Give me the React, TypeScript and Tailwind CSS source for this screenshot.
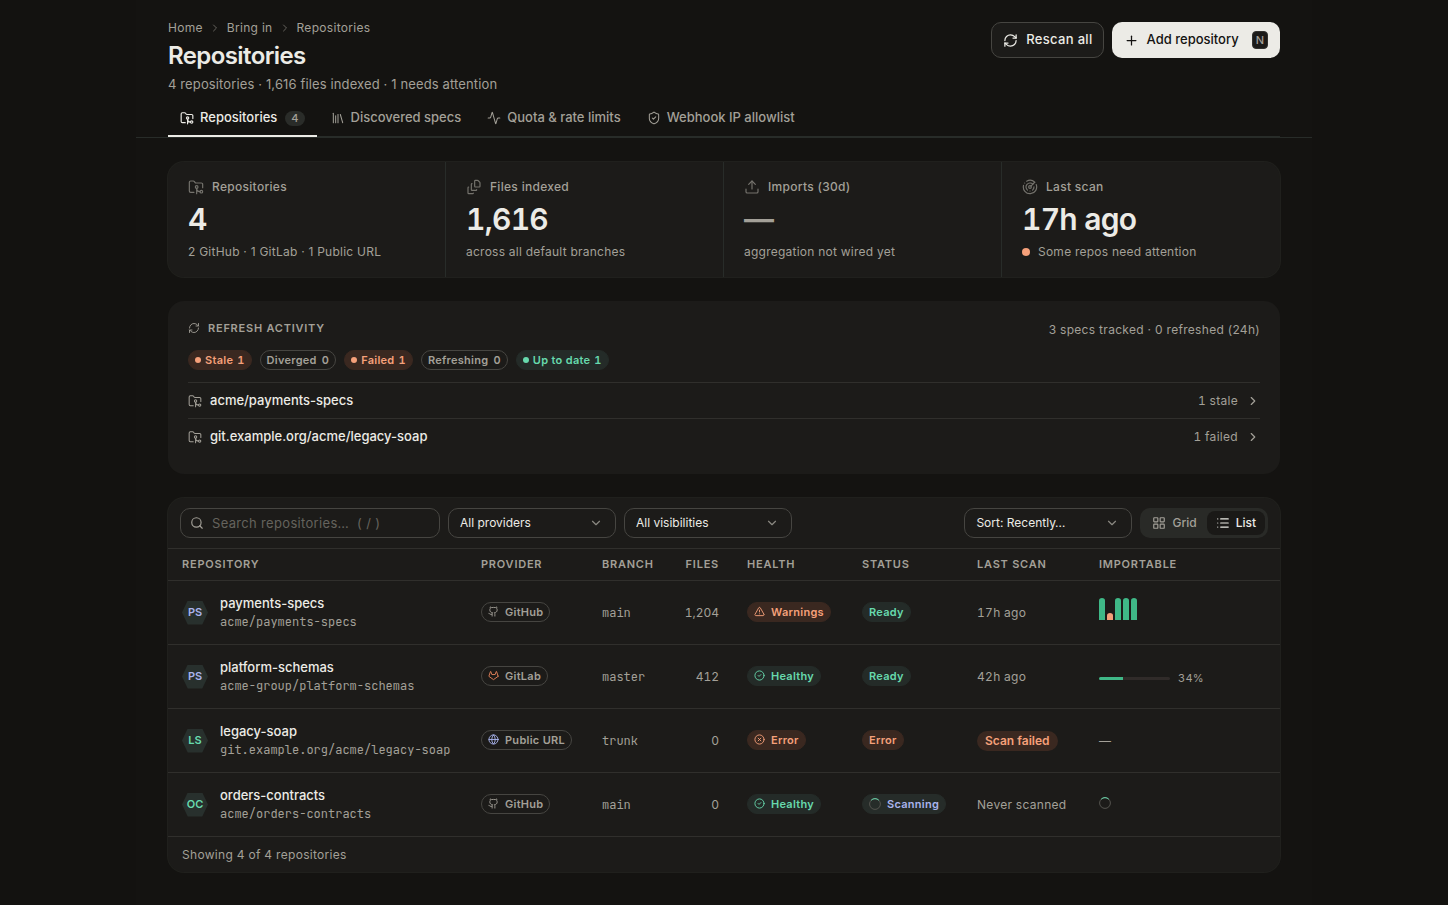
import type { ReactNode } from "react";
import {
  Activity,
  ChevronDown,
  ChevronRight,
  CircleCheck,
  CircleX,
  FileStack,
  FolderGit2,
  Github,
  Gitlab,
  Globe,
  LayoutGrid,
  Library,
  List,
  Plus,
  Radar,
  RefreshCw,
  Search,
  ShieldCheck,
  TriangleAlert,
  Upload,
} from "lucide-react";

type Tone = "warn" | "ok" | "info" | "outline";

const tones: Record<Tone, string> = {
  warn: "border-[#3a2820] bg-[#3a2820] text-[#f5a07a]",
  ok: "border-[#242b28] bg-[#242b28] text-[#67d9ad]",
  info: "border-[#262c29] bg-[#262c29] text-[#a9b3ec]",
  outline: "border-[#464541] text-[#a3a098]",
};

function Pill({ tone, children }: { tone: Tone; children: ReactNode }) {
  return (
    <span
      className={`inline-flex h-5 items-center rounded-full border px-1.5 align-middle text-[11px] leading-4 font-semibold tracking-wide whitespace-nowrap tabular-nums ${tones[tone]}`}
    >
      {children}
    </span>
  );
}

function Spinner({ label }: { label: string }) {
  return (
    <svg viewBox="0 0 12 12" className="size-3" fill="none" role="img" aria-label={label}>
      <circle cx="6" cy="6" r="5.4" stroke="#55544f" />
      <path d="M2.2 2.2a5.4 5.4 0 0 1 7.6 0" stroke="#67d9ad" />
    </svg>
  );
}

function Tab({
  icon,
  label,
  count,
  active = false,
}: {
  icon: ReactNode;
  label: string;
  count?: number;
  active?: boolean;
}) {
  return (
    <button
      role="tab"
      aria-selected={active}
      className={`-mb-px flex h-9 items-center gap-1.5 border-b-2 px-3 text-[13px] font-medium ${
        active ? "border-[#ecebe6] text-[#ecebe6]" : "border-transparent text-[#a3a098]"
      }`}
    >
      {icon}
      {label}
      {count !== undefined && (
        <span className="ml-0.5 rounded-full bg-[#2a2c29] px-1.5 text-[11px] leading-[15px] text-[#a3a098]">
          {count}
        </span>
      )}
    </button>
  );
}

function Stat({
  icon,
  label,
  value,
  muted = false,
  children,
}: {
  icon: ReactNode;
  label: string;
  value: string;
  muted?: boolean;
  children: ReactNode;
}) {
  return (
    <div className="px-5 pt-[15px] pb-[17px]">
      <div className="flex h-5 items-center gap-2 text-xs font-medium tracking-wide text-[#a3a098]">
        <span className="text-[#75736d]">{icon}</span>
        {label}
      </div>
      <div
        className={`mt-1 text-[30px] leading-9 font-semibold tracking-tight tabular-nums ${
          muted ? "text-[#a3a098]" : "text-[#ecebe6]"
        }`}
      >
        {value}
      </div>
      <div className="mt-1.5 flex items-center gap-2 text-xs leading-[17px] tracking-[0.02em] text-[#a3a098]">
        {children}
      </div>
    </div>
  );
}

function FilterSelect({ label, options }: { label: string; options: string[] }) {
  return (
    <div className="relative w-[168px]">
      <select
        aria-label={label}
        className="h-[30px] w-full appearance-none rounded-[10px] border border-[#464541] bg-[#1c1b19] pr-9 pl-[11px] text-xs text-[#ecebe6]"
      >
        {options.map((o) => (
          <option key={o}>{o}</option>
        ))}
      </select>
      <ChevronDown className="pointer-events-none absolute top-2 right-[13px] size-3.5 text-[#8a8881]" />
    </div>
  );
}

function RepoLine({ name, state }: { name: string; state: string }) {
  return (
    <li className="border-t border-[#302f2c]">
      <a href="#repo" className="flex h-[35px] items-center gap-2">
        <FolderGit2 className="size-3.5 text-[#a3a098]" strokeWidth={1.75} />
        <span className="flex-1 text-[13px] font-medium text-[#ecebe6]">{name}</span>
        <span className="text-xs tracking-wide text-[#a3a098] tabular-nums">{state}</span>
        <ChevronRight className="size-3.5 text-[#a3a098]" />
      </a>
    </li>
  );
}

function Provider({ name }: { name: string }) {
  return (
    <Pill tone="outline">
      <span className="mr-1.5">
        {name === "GitHub" && <Github className="size-[11px]" />}
        {name === "GitLab" && <Gitlab className="size-[11px] text-[#e5825a]" />}
        {name === "Public URL" && <Globe className="size-[11px] text-[#a9b3ec]" />}
      </span>
      {name}
    </Pill>
  );
}

function Health({ state }: { state: string }) {
  return (
    <Pill tone={state === "Healthy" ? "ok" : "warn"}>
      <span className="mr-1.5">
        {state === "Healthy" && <CircleCheck className="size-[11px]" />}
        {state === "Warnings" && <TriangleAlert className="size-[11px]" />}
        {state === "Error" && <CircleX className="size-[11px]" />}
      </span>
      {state}
    </Pill>
  );
}

function Status({ state }: { state: string }) {
  if (state === "Scanning") {
    return (
      <Pill tone="info">
        <span className="mr-1.5">
          <Spinner label="Scanning" />
        </span>
        Scanning
      </Pill>
    );
  }
  return <Pill tone={state === "Ready" ? "ok" : "warn"}>{state}</Pill>;
}

const bars = [
  { height: 22, ok: true },
  { height: 7, ok: false },
  { height: 22, ok: true },
  { height: 22, ok: true },
  { height: 22, ok: true },
];

const repos = [
  {
    initials: "PS",
    violet: true,
    name: "payments-specs",
    path: "acme/payments-specs",
    provider: "GitHub",
    branch: "main",
    files: "1,204",
    health: "Warnings",
    status: "Ready",
    scan: "17h ago",
    importable: (
      <svg viewBox="0 0 38 22" className="mb-2 h-[22px] w-[38px]" role="img" aria-label="4 of 5 importable">
        {bars.map((b, i) => (
          <path
            key={i}
            transform={`translate(${i * 8} ${22 - b.height})`}
            d={`M0 ${b.height}V2.5Q0 0 3 0T6 2.5V${b.height}Z`}
            fill={b.ok ? "#3fb887" : "#f5a07a"}
          />
        ))}
      </svg>
    ),
  },
  {
    initials: "PS",
    violet: true,
    name: "platform-schemas",
    path: "acme-group/platform-schemas",
    provider: "GitLab",
    branch: "master",
    files: "412",
    health: "Healthy",
    status: "Ready",
    scan: "42h ago",
    importable: (
      <div className="flex items-center gap-2 pt-1">
        <div className="h-[3px] w-[71px] overflow-hidden rounded-full bg-[#302b29]">
          <div className="h-full bg-[#3fb887]" style={{ width: "34%" }} />
        </div>
        <span className="text-[11px] tracking-wide tabular-nums">34%</span>
      </div>
    ),
  },
  {
    initials: "LS",
    violet: false,
    name: "legacy-soap",
    path: "git.example.org/acme/legacy-soap",
    provider: "Public URL",
    branch: "trunk",
    files: "0",
    health: "Error",
    status: "Error",
    scan: "",
    importable: "—",
  },
  {
    initials: "OC",
    violet: false,
    name: "orders-contracts",
    path: "acme/orders-contracts",
    provider: "GitHub",
    branch: "main",
    files: "0",
    health: "Healthy",
    status: "Scanning",
    scan: "Never scanned",
    importable: (
      <div className="pb-1">
        <Spinner label="Scan in progress" />
      </div>
    ),
  },
];

const columns = [
  { label: "Repository", width: "w-[299px]" },
  { label: "Provider", width: "w-[121px]" },
  { label: "Branch", width: "w-[79px]" },
  { label: "Files", width: "w-[66px]" },
  { label: "Health", width: "w-[115px]" },
  { label: "Status", width: "w-[115px]" },
  { label: "Last scan", width: "w-[122px]" },
  { label: "Importable", width: "" },
];

export default function App() {
  return (
    <div className="min-h-screen bg-[#131210] font-['Inter',sans-serif] text-[#a3a098]">
      <div className="mx-auto min-h-screen max-w-[1176px] bg-[#141311] pb-8">
        <header className="border-b border-[#282c29] px-8 pt-5">
          <div className="flex items-start justify-between gap-4">
            <div>
              <nav aria-label="Breadcrumb" className="flex items-center gap-1.5 text-xs tracking-wide">
                <a href="#home">Home</a>
                <ChevronRight className="size-3 text-[#65635d]" />
                <a href="#bring-in">Bring in</a>
                <ChevronRight className="size-3 text-[#65635d]" />
                <span>Repositories</span>
              </nav>
              <h1 className="mt-1 text-2xl leading-8 font-semibold tracking-tight text-[#ecebe6]">Repositories</h1>
              <p className="mt-0.5 text-[13px] leading-5 tracking-[0.01em]">
                4 repositories · 1,616 files indexed · 1 needs attention
              </p>
            </div>
            <div className="flex gap-2 pt-0.5 text-[13px] font-medium">
              <button className="flex h-9 items-center gap-2 rounded-[10px] border border-[#464541] bg-[#1c1b19] pr-2.5 pl-[11px] tracking-wide text-[#ecebe6]">
                <RefreshCw className="size-[15px]" />
                Rescan all
              </button>
              <button className="flex h-9 items-center gap-2 rounded-[10px] bg-[#ecebe6] px-3 text-[#141311]">
                <Plus className="size-[15px]" />
                Add repository
                <kbd className="ml-[5px] rounded border border-[#33322f] bg-[#1c1b19] px-[3px] font-['Inter',sans-serif] text-[11px] leading-4 text-[#a3a098]">
                  N
                </kbd>
              </button>
            </div>
          </div>
          <div role="tablist" className="mt-[7px] flex gap-0.5 border-b border-[#282c29]">
            <Tab icon={<FolderGit2 className="size-3.5" />} label="Repositories" count={4} active />
            <Tab icon={<Library className="size-3.5" strokeWidth={1.75} />} label="Discovered specs" />
            <Tab icon={<Activity className="size-3.5" strokeWidth={1.75} />} label="Quota & rate limits" />
            <Tab icon={<ShieldCheck className="size-3.5" strokeWidth={1.75} />} label="Webhook IP allowlist" />
          </div>
        </header>

        <main className="flex flex-col gap-6 px-8 pt-6">
          <section
            aria-label="Summary"
            className="grid grid-cols-4 divide-x divide-[#282c29] rounded-2xl bg-[#1c1b19] ring-1 ring-[#20201d]"
          >
            <Stat icon={<FolderGit2 className="size-4" strokeWidth={1.75} />} label="Repositories" value="4">
              2 GitHub · 1 GitLab · 1 Public URL
            </Stat>
            <Stat icon={<FileStack className="size-4" strokeWidth={1.75} />} label="Files indexed" value="1,616">
              across all default branches
            </Stat>
            <Stat icon={<Upload className="size-4" strokeWidth={1.75} />} label="Imports (30d)" value="—" muted>
              aggregation not wired yet
            </Stat>
            <Stat icon={<Radar className="size-4" strokeWidth={1.75} />} label="Last scan" value="17h ago">
              <span className="size-2 rounded-full bg-[#f5a07a]" />
              Some repos need attention
            </Stat>
          </section>

          <section className="rounded-2xl bg-[#1c1b19] p-5">
            <div className="flex items-start justify-between">
              <h2 className="flex items-center gap-2 text-[11px] leading-[14px] font-semibold tracking-[0.07em] uppercase">
                <RefreshCw className="size-3" strokeWidth={1.75} />
                Refresh activity
              </h2>
              <p className="text-xs leading-[18px] tracking-wide">3 specs tracked · 0 refreshed (24h)</p>
            </div>
            <div className="mt-[11px] mb-3 flex flex-wrap gap-2">
              <Pill tone="warn">
                <span className="mr-1 size-1.5 rounded-full bg-current" />
                Stale<span className="ml-1">1</span>
              </Pill>
              <Pill tone="outline">
                Diverged<span className="ml-[5px]">0</span>
              </Pill>
              <Pill tone="warn">
                <span className="mr-1 size-1.5 rounded-full bg-current" />
                Failed<span className="ml-1">1</span>
              </Pill>
              <Pill tone="outline">
                Refreshing<span className="ml-[5px]">0</span>
              </Pill>
              <Pill tone="ok">
                <span className="mr-1 size-1.5 rounded-full bg-current" />
                Up to date<span className="ml-1">1</span>
              </Pill>
            </div>
            <ul>
              <RepoLine name="acme/payments-specs" state="1 stale" />
              <RepoLine name="git.example.org/acme/legacy-soap" state="1 failed" />
            </ul>
          </section>

          <section className="rounded-2xl bg-[#1c1b19] ring-1 ring-[#20201d]">
            <div className="flex items-center gap-2 px-3 py-2.5">
              <div className="relative w-[260px]">
                <Search className="pointer-events-none absolute top-2 left-2.5 size-3.5 text-[#a3a098]" />
                <input
                  type="search"
                  aria-label="Search repositories"
                  placeholder="Search repositories…  ( / )"
                  className="h-[30px] w-full rounded-[10px] border border-[#464541] bg-transparent pr-3 pl-[31px] text-[13px] tracking-wide whitespace-pre text-[#ecebe6] placeholder:text-[#65635d]"
                />
              </div>
              <FilterSelect label="Provider" options={["All providers", "GitHub", "GitLab", "Public URL"]} />
              <FilterSelect label="Visibility" options={["All visibilities", "Public", "Private"]} />
              <div className="flex-1" />
              <FilterSelect label="Sort" options={["Sort: Recently…", "Sort: Name"]} />
              <div className="flex h-[30px] items-center gap-px rounded-[10px] bg-[#292a27] p-[3px] text-xs font-medium">
                <button className="flex h-6 items-center gap-1.5 px-[9px] text-[#a3a098]">
                  <LayoutGrid className="size-3.5" />
                  Grid
                </button>
                <button
                  aria-pressed="true"
                  className="flex h-6 items-center gap-1.5 rounded-lg bg-[#1a1917] px-[9px] text-[#ecebe6]"
                >
                  <List className="size-3.5" />
                  List
                </button>
              </div>
            </div>
            <table className="w-full table-fixed text-left text-xs">
              <thead>
                <tr className="h-8 border-y border-[#302f2c] text-[11px] uppercase">
                  {columns.map((c) => (
                    <th
                      key={c.label}
                      scope="col"
                      className={`px-3.5 font-semibold tracking-[0.07em] ${c.width} ${c.label === "Files" ? "text-right" : ""}`}
                    >
                      {c.label}
                    </th>
                  ))}
                </tr>
              </thead>
              <tbody>
                {repos.map((r) => (
                  <tr key={r.name} className="h-16 border-b border-[#302f2c]">
                    <td className="px-3.5">
                      <div className="flex items-center gap-3">
                        <span
                          className={`flex h-6 w-[26px] shrink-0 items-center justify-center bg-[#28302d] text-[11px] font-semibold [clip-path:polygon(22%_0,78%_0,100%_50%,78%_100%,22%_100%,0_50%)] ${
                            r.violet ? "text-[#a9b3ec]" : "text-[#67d9ad]"
                          }`}
                        >
                          {r.initials}
                        </span>
                        <div>
                          <a href="#repo" className="block text-[13px] leading-[19px] font-medium text-[#ecebe6]">
                            {r.name}
                          </a>
                          <div className="font-['JetBrains_Mono','Roboto_Mono','Liberation_Mono',monospace] text-xs leading-[18px] whitespace-nowrap">
                            {r.path}
                          </div>
                        </div>
                      </div>
                    </td>
                    <td className="px-3.5 pb-0.5">
                      <Provider name={r.provider} />
                    </td>
                    <td className="px-3.5 font-['JetBrains_Mono','Roboto_Mono','Liberation_Mono',monospace]">
                      {r.branch}
                    </td>
                    <td className="px-3.5 text-right tabular-nums">{r.files}</td>
                    <td className="px-3.5 pb-0.5">
                      <Health state={r.health} />
                    </td>
                    <td className="px-3.5 pb-0.5">
                      <Status state={r.status} />
                    </td>
                    <td className="px-3.5 tracking-wide whitespace-nowrap tabular-nums">
                      {r.scan || (
                        <span className="inline-flex h-5 items-center rounded-full bg-[#3a2820] px-2 align-middle font-semibold tracking-normal text-[#f5a07a]">
                          Scan failed
                        </span>
                      )}
                    </td>
                    <td className="px-3.5">{r.importable}</td>
                  </tr>
                ))}
              </tbody>
            </table>
            <p className="px-3.5 pt-2.5 pb-[9px] text-xs leading-4 tracking-wide">Showing 4 of 4 repositories</p>
          </section>
        </main>
      </div>
    </div>
  );
}
